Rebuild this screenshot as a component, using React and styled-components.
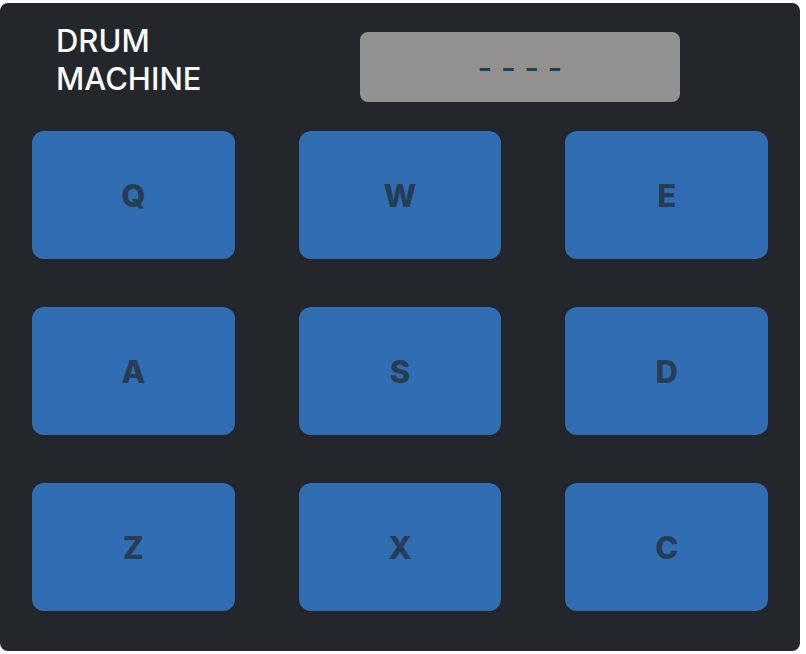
import React, { useState } from "react";
import styled, { createGlobalStyle } from "styled-components";

const GlobalStyle = createGlobalStyle`
  *, *::before, *::after { box-sizing: border-box; }
  body {
    margin: 0;
    background: #ffffff;
    font-family: Inter, sans-serif;
  }
`;

const Machine = styled.main`
  margin: 3px 6px 3px 0;
  padding: 19px 32px 40px;
  border-radius: 8px;
  background: #23262b;
`;

const Header = styled.header`
  display: flex;
  justify-content: space-between;
  align-items: flex-end;
  padding: 0 88px 0 24px;
`;

const Title = styled.h1`
  width: min-content;
  margin: 0 0 4px;
  color: #f8f9fa;
  font-size: 31px;
  font-weight: 500;
  line-height: 38px;
`;

const Display = styled.output`
  display: flex;
  align-items: center;
  justify-content: center;
  width: 320px;
  height: 70px;
  border-radius: 8px;
  background: #92918f;
  color: #1b4353;
  font-size: 32px;
  font-weight: 500;
`;

const Pads = styled.section`
  display: grid;
  grid-template-columns: repeat(3, 1fr);
  gap: 48px 64px;
  margin-top: 29px;
`;

const Pad = styled.button`
  height: 128px;
  padding: 0;
  border: 0;
  border-radius: 12px;
  background: #316db3;
  color: #263d54;
  font-family: inherit;
  font-size: 31px;
  font-weight: 800;
  cursor: pointer;
`;

const keys = ["Q", "W", "E", "A", "S", "D", "Z", "X", "C"];

export default function App() {
  const [last, setLast] = useState("- - - -");
  return (
    <>
      <GlobalStyle />
      <Machine>
        <Header>
          <Title>DRUM MACHINE</Title>
          <Display>{last}</Display>
        </Header>
        <Pads>
          {keys.map((key) => (
            <Pad key={key} type="button" onClick={() => setLast(key)}>
              {key}
            </Pad>
          ))}
        </Pads>
      </Machine>
    </>
  );
}
